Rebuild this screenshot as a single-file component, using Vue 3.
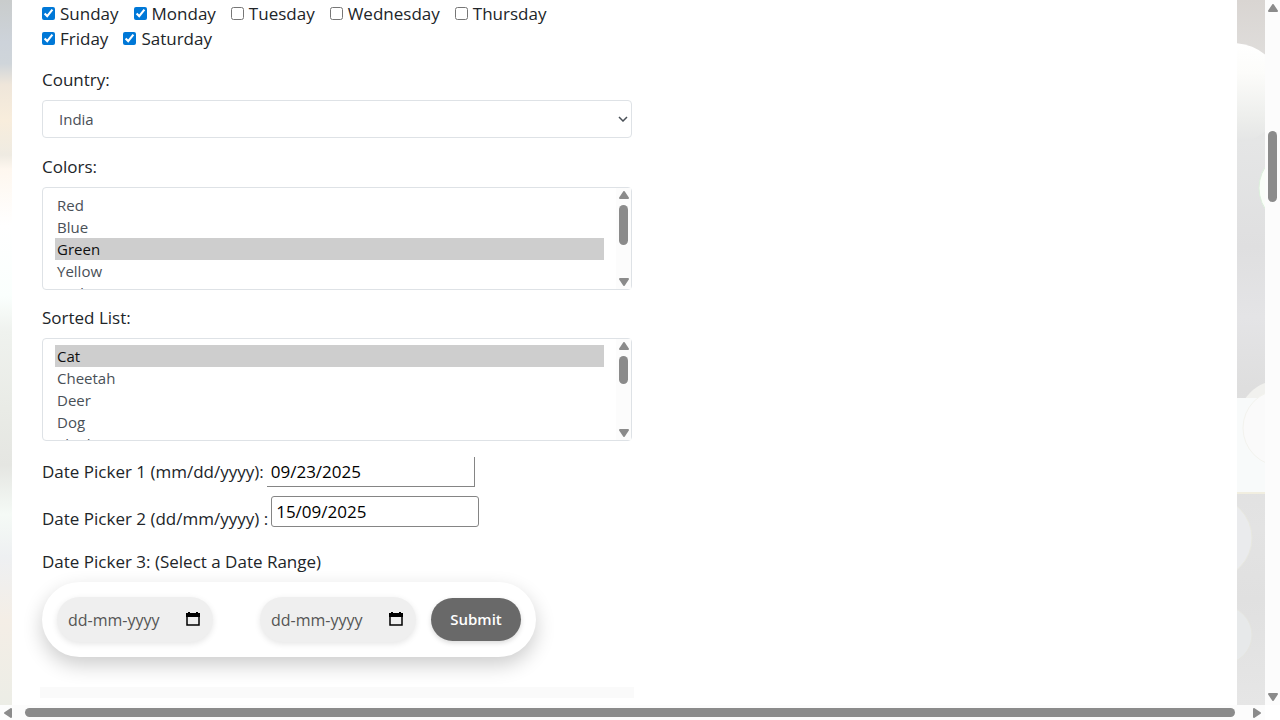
<script setup>
import { ref } from 'vue'

const days = ref([
  { name: 'Sunday', on: true },
  { name: 'Monday', on: true },
  { name: 'Tuesday', on: false },
  { name: 'Wednesday', on: false },
  { name: 'Thursday', on: false },
  { name: 'Friday', on: true },
  { name: 'Saturday', on: true },
])
const countries = ['United States', 'Canada', 'United Kingdom', 'Germany', 'France', 'Australia', 'Japan', 'China', 'Brazil', 'India']
const country = ref('India')
const colorNames = ['Red', 'Blue', 'Green', 'Yellow', 'Red', 'White', 'Green']
const colors = ref([2])
const animalNames = ['Cat', 'Cheetah', 'Deer', 'Dog', 'Elephant', 'Fox', 'Giraffe', 'Lion', 'Rabbit', 'Zebra']
const animals = ref([0])
const date1 = ref('09/23/2025')
const date2 = ref('15/09/2025')
const startDate = ref('')
const endDate = ref('')
</script>

<template>
  <div class="window">
    <div class="viewport">
      <div class="side left"></div>
      <main class="page">
        <form class="form" @submit.prevent>
          <div class="days">
            <label v-for="d in days" :key="d.name" class="day">
              <input v-model="d.on" type="checkbox" />{{ d.name }}
            </label>
          </div>

          <div class="group">
            <label for="country">Country:</label>
            <div class="field">
              <select id="country" v-model="country" class="control single">
                <option v-for="c in countries" :key="c">{{ c }}</option>
              </select>
              <svg class="chevron" viewBox="0 0 10 6" width="10" height="6"><path d="M1 1l4 4 4-4" fill="none" stroke="#495057" stroke-width="1.5" /></svg>
            </div>
          </div>

          <div class="group">
            <label for="colors">Colors:</label>
            <div class="field">
              <select id="colors" v-model="colors" class="control list" multiple>
                <option v-for="(c, i) in colorNames" :key="i" :value="i">{{ c }}</option>
              </select>
              <div class="track">
                <svg viewBox="0 0 10 8" width="10" height="8"><path d="M5 1L9 7H1z" class="arrow" /></svg>
                <div class="rail"><div class="thumb colors-thumb"></div></div>
                <svg viewBox="0 0 10 8" width="10" height="8"><path d="M5 7L1 1h8z" class="arrow" /></svg>
              </div>
            </div>
          </div>

          <div class="group sorted">
            <label for="animals">Sorted List:</label>
            <div class="field">
              <select id="animals" v-model="animals" class="control list" multiple>
                <option v-for="(a, i) in animalNames" :key="i" :value="i">{{ a }}</option>
              </select>
              <div class="track">
                <svg viewBox="0 0 10 8" width="10" height="8"><path d="M5 1L9 7H1z" class="arrow" /></svg>
                <div class="rail"><div class="thumb animals-thumb"></div></div>
                <svg viewBox="0 0 10 8" width="10" height="8"><path d="M5 7L1 1h8z" class="arrow" /></svg>
              </div>
            </div>
          </div>

          <div class="date-row first">
            <label for="date1">Date Picker 1 (mm/dd/yyyy):</label>
            <input id="date1" v-model="date1" class="date open" type="text" />
          </div>
          <div class="date-row second">
            <label for="date2">Date Picker 2 (dd/mm/yyyy) :</label>
            <input id="date2" v-model="date2" class="date boxed" type="text" />
          </div>

          <p class="range-title">Date Picker 3: (Select a Date Range)</p>
          <div class="range">
            <div class="pill">
              <input v-model="startDate" type="text" placeholder="dd-mm-yyyy" aria-label="Start date" />
              <svg viewBox="0 0 14 16" width="14" height="16"><path d="M3 0v2M11 0v2" stroke="#000" stroke-width="2" /><path d="M0 1h14v4H0z" /><path d="M1 4v9h12V4" fill="none" stroke="#000" stroke-width="1.5" /></svg>
            </div>
            <div class="pill end">
              <input v-model="endDate" type="text" placeholder="dd-mm-yyyy" aria-label="End date" />
              <svg viewBox="0 0 14 16" width="14" height="16"><path d="M3 0v2M11 0v2" stroke="#000" stroke-width="2" /><path d="M0 1h14v4H0z" /><path d="M1 4v9h12V4" fill="none" stroke="#000" stroke-width="1.5" /></svg>
            </div>
            <button class="submit" type="submit">Submit</button>
          </div>
        </form>
        <div class="divider"></div>
      </main>
      <div class="side right">
        <svg viewBox="0 0 28 705" width="28" height="705">
          <defs>
            <linearGradient id="glow" x1="0" y1="0" x2="0" y2="1">
              <stop offset="0" stop-color="#ffffff" />
              <stop offset="0.3" stop-color="#fcfcfa" />
              <stop offset="0.75" stop-color="#edeeec" />
              <stop offset="1" stop-color="#e4e5e5" />
            </linearGradient>
          </defs>
          <circle cx="-4" cy="93" r="50" fill="url(#glow)" />
          <circle cx="60" cy="188" r="38" fill="#f9fdf8" stroke="#dcefdc" />
          <circle cx="44" cy="424" r="44" fill="#f1f1ee" />
          <path d="M0 398h28v95H0z" fill="#f8fafa" />
          <path d="M0 493h28" stroke="#f1eee0" stroke-width="2" />
          <circle cx="44" cy="428" r="38" fill="#fafafa" stroke="#f3f3ee" />
          <circle cx="-26" cy="538" r="41" fill="#eaebed" stroke="#e8e8e0" />
          <circle cx="-14" cy="635" r="29" fill="#e7e9ea" stroke="#e5e5e0" />
        </svg>
      </div>
    </div>
    <div class="bar vertical">
      <svg viewBox="0 0 10 8" width="10" height="8"><path d="M5 1L9 7H1z" class="arrow" /></svg>
      <div class="rail"><div class="thumb page-thumb"></div></div>
      <svg viewBox="0 0 10 8" width="10" height="8"><path d="M5 7L1 1h8z" class="arrow" /></svg>
    </div>
    <div class="bar horizontal">
      <svg viewBox="0 0 8 10" width="8" height="10"><path d="M1 5L7 1v8z" class="arrow" /></svg>
      <div class="thumb wide-thumb"></div>
      <svg viewBox="0 0 8 10" width="8" height="10"><path d="M7 5L1 1v8z" class="arrow" /></svg>
    </div>
  </div>
</template>

<style>
body { background: #fff; }
</style>

<style scoped>
* { box-sizing: border-box; }
.window {
  display: grid;
  grid-template: minmax(0, 1fr) 15px / minmax(0, 1fr) 15px;
  height: 100vh;
  overflow: hidden;
  font: 17px/25px "Open Sans", "Noto Sans", sans-serif;
  color: #212529;
}
.viewport {
  display: grid;
  grid-template-columns: 12px minmax(0, 1fr) 28px;
  overflow: hidden;
}
.left {
  background: linear-gradient(#c9cccc 0, #cdd3da 6%, #cfd5da 9%, #efe6da 12%, #f8eddc 17%, #efebe2 22%, #fef7ef 24%, #fff 32%, #fafffd 42%, #eff2ee 47%, #e9ebe6 58%, #e5e6e2 66%, #f5faf6 73%, #eef0f2 79%, #f4eee6 88%, #ecede6 100%);
}
.right {
  overflow: hidden;
  background: linear-gradient(#d9d5d2 0, #dfdddb 8%, #e5e6e6 20%, #dfdfe0 35%, #e4e4e6 45%, #dedede 55%, #e3e3e3 75%, #e0e0e0 85%, #e6e6e6 100%);
}
.right svg { display: block; }
.page { background: #fff; padding: 1px 0 0 28px; overflow: hidden; }
.form { width: 594px; padding: 0 2px; }
.days { display: flex; flex-wrap: wrap; column-gap: 15px; padding-right: 40px; }
.day { display: flex; align-items: center; gap: 5px; }
.day input { width: 13px; height: 13px; margin: 0; accent-color: #0078d7; }
.group { margin-top: 16px; }
.group.sorted { margin-top: 15px; }
.group > label { display: block; margin-bottom: 8px; }
.field { position: relative; }
.control {
  display: block;
  width: 100%;
  margin: 0;
  border: 1px solid #dee2e6;
  border-radius: 4px;
  background: #fff;
  color: #495057;
  font: 15px/22px "Open Sans", "Noto Sans", sans-serif;
  appearance: none;
  outline: none;
}
.single { height: 38px; padding: 6px 16px; }
.chevron { position: absolute; right: 4px; top: 16px; }
.list { height: 103px; padding: 6px 27px 6px 12px; overflow: hidden; }
.list option { height: 22px; min-height: 22px; padding: 1px 2px 0; }
.list option:checked { background: #cecece linear-gradient(#cecece, #cecece); color: #101010; }
.track {
  position: absolute;
  top: 1px;
  right: 1px;
  bottom: 1px;
  width: 15px;
  padding: 3px 0;
  display: flex;
  flex-direction: column;
  align-items: center;
  background: #fcfcfc;
}
.rail { flex: 1; }
.arrow { fill: #8b8b8b; stroke: #8b8b8b; stroke-width: 2; stroke-linejoin: round; }
.thumb { background: #8b8b8b; border-radius: 5px; }
.track .thumb { width: 9px; margin-top: 6px; }
.colors-thumb { height: 40px; }
.animals-thumb { height: 28px; }
.date-row { display: flex; align-items: center; gap: 3px; margin-top: 16px; }
.first label { margin-bottom: 2px; }
.second { align-items: flex-end; margin-top: 9px; }
.second label { margin-bottom: -4px; }
.date {
  width: 208px;
  height: 31px;
  padding: 1px 4px;
  border: 1px solid #858585;
  color: #000;
  background: #fff;
  font: inherit;
  outline: none;
}
.open { height: 30px; border-width: 0 1px 1px 0; }
.boxed { border-radius: 3px; }
.range-title { margin: 22px 0 8px; }
.range {
  display: flex;
  align-items: flex-start;
  width: fit-content;
  height: 75px;
  padding: 15px;
  border-radius: 38px;
  background: #fff;
  box-shadow: 0 8px 20px rgba(0, 0, 0, 0.2);
}
.pill {
  display: flex;
  align-items: center;
  width: 156px;
  height: 45px;
  margin-right: 47px;
  padding: 0 13px 0 11px;
  border-radius: 23px;
  background: #efefef;
  box-shadow: 0 2px 6px rgba(0, 0, 0, 0.1);
}
.pill.end { margin-right: 15px; }
.pill input {
  flex: 1;
  min-width: 0;
  padding: 0;
  border: 0;
  background: none;
  color: #555;
  font: 16px/24px "Open Sans", "Noto Sans", sans-serif;
  outline: none;
}
.pill input::placeholder { color: #555; opacity: 1; }
.submit {
  width: 90px;
  height: 43px;
  margin-top: 1px;
  padding: 0 0 2px;
  border: 0;
  border-radius: 22px;
  background: #696969;
  color: #fff;
  font: 600 15px/22px "Open Sans", "Noto Sans", sans-serif;
  box-shadow: 0 2px 5px rgba(0, 0, 0, 0.15);
}
.divider { width: 594px; height: 11px; margin-top: 30px; background: #fafafa; }
.bar { display: flex; align-items: center; background: #fcfcfc; }
.vertical { flex-direction: column; padding: 4px 0; }
.page-thumb { width: 9px; height: 71px; margin-top: 119px; }
.horizontal { padding: 0 4px; }
.wide-thumb { flex: 1; height: 9px; margin: 0 18px 0 13px; }
</style>
